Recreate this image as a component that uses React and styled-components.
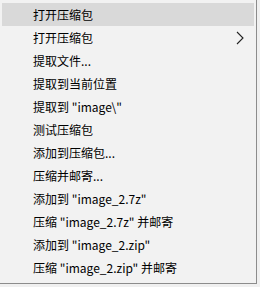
import React from 'react'
import styled, { createGlobalStyle } from 'styled-components'

const GlobalStyle = createGlobalStyle`
  html, body {
    margin: 0;
    padding: 0;
    background: #f0f0f0;
  }
`

const Menu = styled.ul`
  list-style: none;
  margin: 0;
  padding: 3px 2px 4px 2px;
  width: 252px;
  background: #f2f2f2;
  border-right: 1px solid #8c8c8c;
  border-bottom: 1px solid #8c8c8c;
  font-family: "Noto Sans CJK SC", "Noto Sans", sans-serif;
  font-size: 12px;
  color: #000;
`

const Item = styled.li`
  display: flex;
  align-items: center;
  justify-content: space-between;
  height: 23px;
  padding: 0 10px 0 31px;
  background: ${(p) => (p.active ? '#d9d9d9' : 'transparent')};
  white-space: pre;
`

const Chevron = () => (
  <svg width="8" height="14" viewBox="0 0 8 14">
    <path d="M1 1 L7 7 L1 13" fill="none" stroke="#222" strokeWidth="1.1" />
  </svg>
)

const items = [
  { label: '打开压缩包', active: true },
  { label: '打开压缩包', sub: true },
  { label: '提取文件...' },
  { label: '提取到当前位置' },
  { label: '提取到 "image\\"' },
  { label: '测试压缩包' },
  { label: '添加到压缩包...' },
  { label: '压缩并邮寄...' },
  { label: '添加到 "image_2.7z"' },
  { label: '压缩 "image_2.7z" 并邮寄' },
  { label: '添加到 "image_2.zip"' },
  { label: '压缩 "image_2.zip" 并邮寄' },
]

const App = () => (
  <>
    <GlobalStyle />
    <Menu>
      {items.map((it, i) => (
        <Item key={i} active={it.active}>
          <span>{it.label}</span>
          {it.sub && <Chevron />}
        </Item>
      ))}
    </Menu>
  </>
)

export default App
